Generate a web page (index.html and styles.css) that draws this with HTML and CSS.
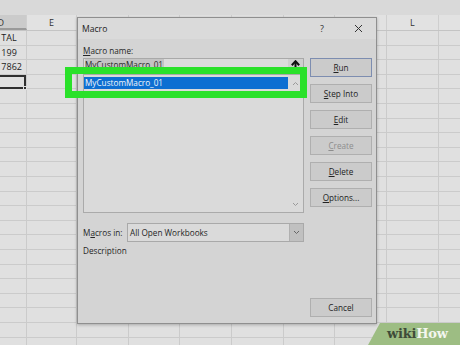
FILE: index.html
```html
<!DOCTYPE html>
<html>
<head>
<meta charset="utf-8">
<link rel="stylesheet" href="styles.css">
</head>
<body>
<div class="sheet">
  <div class="topstrip"></div>
  <div class="colheads">
    <div class="ch ch-d">D</div>
    <div class="ch ch-e">E</div>
    <div class="ch"></div>
    <div class="ch"></div>
    <div class="ch"></div>
    <div class="ch"></div>
    <div class="ch"></div>
    <div class="ch"></div>
    <div class="ch ch-l">L</div>
    <div class="ch"></div>
  </div>
  <div class="cells">
    <div class="col col-d">
      <div class="cell">TAL</div>
      <div class="cell">199</div>
      <div class="cell">7862</div>
      <div class="cell active"><span class="handle"></span></div>
    </div>
    <div class="col col-e"></div>
    <div class="col"></div>
    <div class="col"></div>
    <div class="col"></div>
    <div class="col"></div>
    <div class="col"></div>
    <div class="col"></div>
    <div class="col col-l"></div>
    <div class="col"></div>
  </div>
</div>

<div class="dialog">
  <div class="titlebar">
    <span class="title">Macro</span>
    <span class="tb-btn">?</span>
    <span class="tb-btn">
      <svg width="9" height="9" viewBox="0 0 9 9"><path d="M1 1L8 8M8 1L1 8" stroke="#333" stroke-width="1"/></svg>
    </span>
  </div>
  <div class="body">
    <div class="leftcol">
      <div class="label"><u>M</u>acro name:</div>
      <div class="input">
        <span class="sel-text">MyCustomMacro_01</span>
        <span class="upbtn">
          <svg width="9" height="10" viewBox="0 0 9 10"><path d="M4.5 1.5V10" stroke="#111" stroke-width="2"/><path d="M0.8 5.2L4.5 1.2L8.2 5.2" fill="none" stroke="#111" stroke-width="2"/></svg>
        </span>
      </div>
      <div class="listbox">
        <div class="items">
          <div class="item selected">MyCustomMacro_01</div>
        </div>
        <div class="vscroll">
          <svg width="7" height="5" viewBox="0 0 7 5"><path d="M1 4L3.5 1.5L6 4" fill="none" stroke="#9a9a9a" stroke-width="1"/></svg>
          <svg width="7" height="5" viewBox="0 0 7 5"><path d="M1 1L3.5 3.5L6 1" fill="none" stroke="#9a9a9a" stroke-width="1"/></svg>
        </div>
      </div>
      <div class="macros-in">
        <span class="mi-label">M<u>a</u>cros in:</span>
        <div class="dropdown">
          <span class="dd-text">All Open Workbooks</span>
          <span class="dd-arrow">
            <svg width="7" height="5" viewBox="0 0 7 5"><path d="M1 1L3.5 3.5L6 1" fill="none" stroke="#666" stroke-width="1"/></svg>
          </span>
        </div>
      </div>
      <div class="desc">Description</div>
    </div>
    <div class="rightcol">
      <div class="btn default"><u>R</u>un</div>
      <div class="btn"><u>S</u>tep Into</div>
      <div class="btn"><u>E</u>dit</div>
      <div class="btn disabled"><u>C</u>reate</div>
      <div class="btn"><u>D</u>elete</div>
      <div class="btn"><u>O</u>ptions...</div>
      <div class="btn cancel">Cancel</div>
    </div>
  </div>
</div>

<div class="highlight"></div>

<div class="logo"><span class="wiki">wiki</span><span class="how">How</span></div>
</body>
</html>
```

FILE: styles.css
```css
* { box-sizing: border-box; }
html, body {
  margin: 0;
  padding: 0;
}
body {
  width: 460px;
  height: 345px;
  overflow: hidden;
  position: relative;
  background: #e0e0e0;
  font-family: "Open Sans", "Noto Sans", sans-serif;
  color: #262626;
}

/* ---------- spreadsheet ---------- */
.sheet {
  display: flex;
  flex-direction: column;
  width: 460px;
  height: 345px;
  overflow: hidden;
}
.topstrip {
  height: 15px;
  background: #d9d9d9;
  flex: none;
}
.colheads {
  display: flex;
  height: 16px;
  flex: none;
  background: #e2e2e2;
  border-bottom: 1px solid #c4c4c4;
  margin-left: -24.67px;
}
.ch {
  width: 51.67px;
  flex: none;
  font-size: 9px;
  line-height: 15px;
  text-align: center;
  color: #333;
  border-right: 1px solid #cfcfcf;
}
.ch-d {
  background: #cbcbcb;
  border-bottom: 2px solid #9a9a9a;
}
.ch-e { width: 50px; }
.ch-l { width: 52px; }

.cells {
  flex: 1;
  display: flex;
  margin-left: -24.67px;
}
.col {
  width: 51.67px;
  flex: none;
  border-right: 1px solid #cbcbcb;
  background: repeating-linear-gradient(to bottom, transparent 0, transparent 13.6px, #cbcbcb 13.6px, #cbcbcb 14.6px);
}
.col-e { width: 50px; }
.col-l { width: 52px; }
.col-d {
  display: flex;
  flex-direction: column;
}
.cell {
  height: 14.6px;
  flex: none;
  font-size: 9px;
  line-height: 14px;
  padding-left: 26px;
  color: #222;
  position: relative;
}
.cell.active {
  border: 2px solid #2f2f2f;
}
.handle {
  position: absolute;
  right: -3px;
  bottom: -3px;
  width: 4px;
  height: 4px;
  background: #2f2f2f;
  border: 1px solid #e0e0e0;
}

/* ---------- dialog ---------- */
.dialog {
  position: absolute;
  left: 77px;
  top: 17px;
  width: 300px;
  height: 307px;
  border: 1px solid #8f8f8f;
  background: #d4d4d4;
  box-shadow: 0 1px 3px rgba(0,0,0,0.25);
  display: flex;
  flex-direction: column;
  font-size: 8.2px;
}
.titlebar {
  height: 21px;
  flex: none;
  display: flex;
  align-items: center;
  padding-left: 4px;
  background: #dadada;
}
.title {
  font-size: 8.6px;
  color: #222;
  flex: 1;
}
.tb-btn {
  width: 36px;
  height: 21px;
  display: flex;
  align-items: center;
  justify-content: center;
  font-size: 9px;
  color: #333;
}
.body {
  flex: 1;
  display: flex;
  gap: 6px;
  padding: 6px 4px 6px 5px;
}
.leftcol {
  width: 221px;
  display: flex;
  flex-direction: column;
}
.label {
  height: 13px;
  line-height: 12px;
}
.input {
  height: 14px;
  border: 1px solid #a9a9a9;
  background: #dcdcdc;
  display: flex;
  align-items: center;
  padding-left: 1px;
}
.sel-text {
  background: #c3c3c3;
  line-height: 12px;
  padding-right: 1px;
  color: #2a2a2a;
}
.upbtn {
  margin-left: auto;
  width: 15px;
  height: 12px;
  display: flex;
  align-items: center;
  justify-content: center;
  background: #cfcfcf;
}
.listbox {
  margin-top: 2px;
  height: 139px;
  border: 1px solid #aaaaaa;
  background: #dadada;
  display: flex;
}
.items {
  flex: 1;
  padding-top: 2px;
}
.item {
  height: 12px;
  line-height: 12px;
  padding-left: 1px;
}
.item.selected {
  background: #0d6fd2;
  color: #f2f6fb;
}
.vscroll {
  width: 15px;
  display: flex;
  flex-direction: column;
  justify-content: space-between;
  align-items: center;
  padding: 6px 0 5px;
}
.macros-in {
  margin-top: 10px;
  height: 19px;
  display: flex;
  align-items: center;
}
.mi-label {
  width: 44px;
  flex: none;
}
.dropdown {
  flex: 1;
  height: 19px;
  border: 1px solid #a9a9a9;
  background: #dadada;
  display: flex;
  align-items: center;
  padding-left: 2px;
}
.dd-arrow {
  margin-left: auto;
  width: 14px;
  height: 17px;
  background: #c0c0c0;
  border-left: 1px solid #b0b0b0;
  display: flex;
  align-items: center;
  justify-content: center;
}
.desc {
  margin-top: 3px;
  line-height: 12px;
}
.rightcol {
  width: 62px;
  display: flex;
  flex-direction: column;
  gap: 7px;
  padding-top: 13px;
}
.btn {
  height: 19px;
  flex: none;
  border: 1px solid #afafaf;
  background: #cbcbcb;
  display: flex;
  align-items: center;
  justify-content: center;
  color: #222;
}
.btn.default {
  border-color: #7d8db0;
}
.btn.disabled {
  color: #8d8d8d;
}
.btn.cancel {
  margin-top: auto;
}

/* ---------- overlays ---------- */
.highlight {
  position: absolute;
  left: 65px;
  top: 67px;
  width: 242px;
  height: 31px;
  border: 7px solid #2ae12a;
}
.logo {
  position: absolute;
  left: 368px;
  top: 323px;
  width: 92px;
  height: 22px;
  background: #9dbd83;
  clip-path: polygon(12px 0, 100% 0, 100% 100%, 0 100%);
  font-family: "DejaVu Serif", serif;
  font-weight: bold;
  font-size: 13px;
  line-height: 22px;
  padding-left: 19px;
  letter-spacing: -0.2px;
  white-space: nowrap;
  overflow: hidden;
}
.wiki { color: #3e4b38; }
.how { color: #f3f6ef; }
```
